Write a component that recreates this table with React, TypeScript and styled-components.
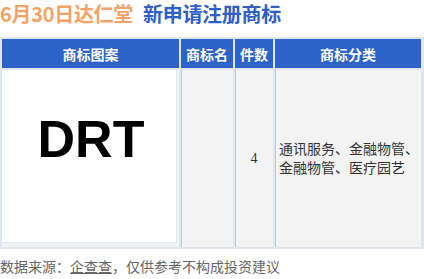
import React from "react";
import styled, { createGlobalStyle } from "styled-components";

const Global = createGlobalStyle`
  html, body { margin: 0; padding: 0; background: #ffffff; }
  body { font-family: "Noto Sans CJK SC", "Noto Sans", sans-serif; width: 424px; height: 279px; overflow: hidden; }
`;

const Page = styled.div`
  display: flex;
  flex-direction: column;
  width: 424px;
`;

const Title = styled.h1`
  margin: 0;
  height: 28px;
  display: flex;
  align-items: center;
  gap: 10px;
  font-size: 20px;
  line-height: 28px;
  font-weight: 700;
  letter-spacing: -0.3px;
`;

const TitlePart = styled.span<{ $color: string }>`
  color: ${(p) => p.$color};
`;

const Table = styled.div`
  margin-top: 9px;
  display: grid;
  grid-template-columns: 177px 52px 38px 146px;
  grid-template-rows: 29px 177px;
  column-gap: 2px;
  row-gap: 2px;
  padding: 2px 3px 2px 2px;
  background: #dfe6ef;
  width: 424px;
  box-sizing: border-box;
`;

const HeadCell = styled.div`
  background: #2d63c8;
  color: #ffffff;
  font-size: 14px;
  font-weight: 700;
  display: flex;
  align-items: center;
  justify-content: center;
`;

const Cell = styled.div<{ $align?: string }>`
  background: #f3f3f3;
  color: #333333;
  font-size: 14px;
  display: flex;
  align-items: center;
  justify-content: ${(p) => p.$align || "center"};
  box-shadow: inset 1px 0 0 #c8c8c8;
`;

const ImageCell = styled.div`
  background: #f3f3f3;
  padding: 0 2px 4px 0;
  display: flex;
`;

const ImageBox = styled.div`
  flex: 1;
  background: #ffffff;
  box-shadow: inset -1px -1px 0 #e3e8ee;
  display: flex;
  justify-content: center;
  align-items: flex-start;
  padding-top: 43px;
`;

const Logo = styled.div`
  font-family: "Liberation Sans", Arial, sans-serif;
  font-weight: 700;
  font-size: 52px;
  line-height: 52px;
  color: #000000;
  padding-left: 3px;
`;

const Num = styled.span`
  font-family: "Liberation Serif", "Times New Roman", serif;
  font-size: 14px;
  color: #333;
`;

const Classes = styled.div`
  padding-left: 4px;
  line-height: 19px;
  font-size: 14px;
  color: #333;
  margin-top: -2px;
`;

const Footer = styled.div`
  margin-top: 7px;
  font-size: 14px;
  line-height: 20px;
  color: #666666;
`;

const Link = styled.span`
  text-decoration: underline;
`;

export default function App() {
  return (
    <Page>
      <Global />
      <Title>
        <TitlePart $color="#f5a266">6月30日达仁堂</TitlePart>
        <TitlePart $color="#2e5ec6">新申请注册商标</TitlePart>
      </Title>
      <Table>
        <HeadCell>商标图案</HeadCell>
        <HeadCell>商标名</HeadCell>
        <HeadCell>件数</HeadCell>
        <HeadCell>商标分类</HeadCell>
        <ImageCell>
          <ImageBox>
            <Logo>DRT</Logo>
          </ImageBox>
        </ImageCell>
        <Cell />
        <Cell>
          <Num>4</Num>
        </Cell>
        <Cell $align="flex-start">
          <Classes>
            通讯服务、金融物管、
            <br />
            金融物管、医疗园艺
          </Classes>
        </Cell>
      </Table>
      <Footer>
        数据来源：<Link>企查查</Link>，仅供参考不构成投资建议
      </Footer>
    </Page>
  );
}
